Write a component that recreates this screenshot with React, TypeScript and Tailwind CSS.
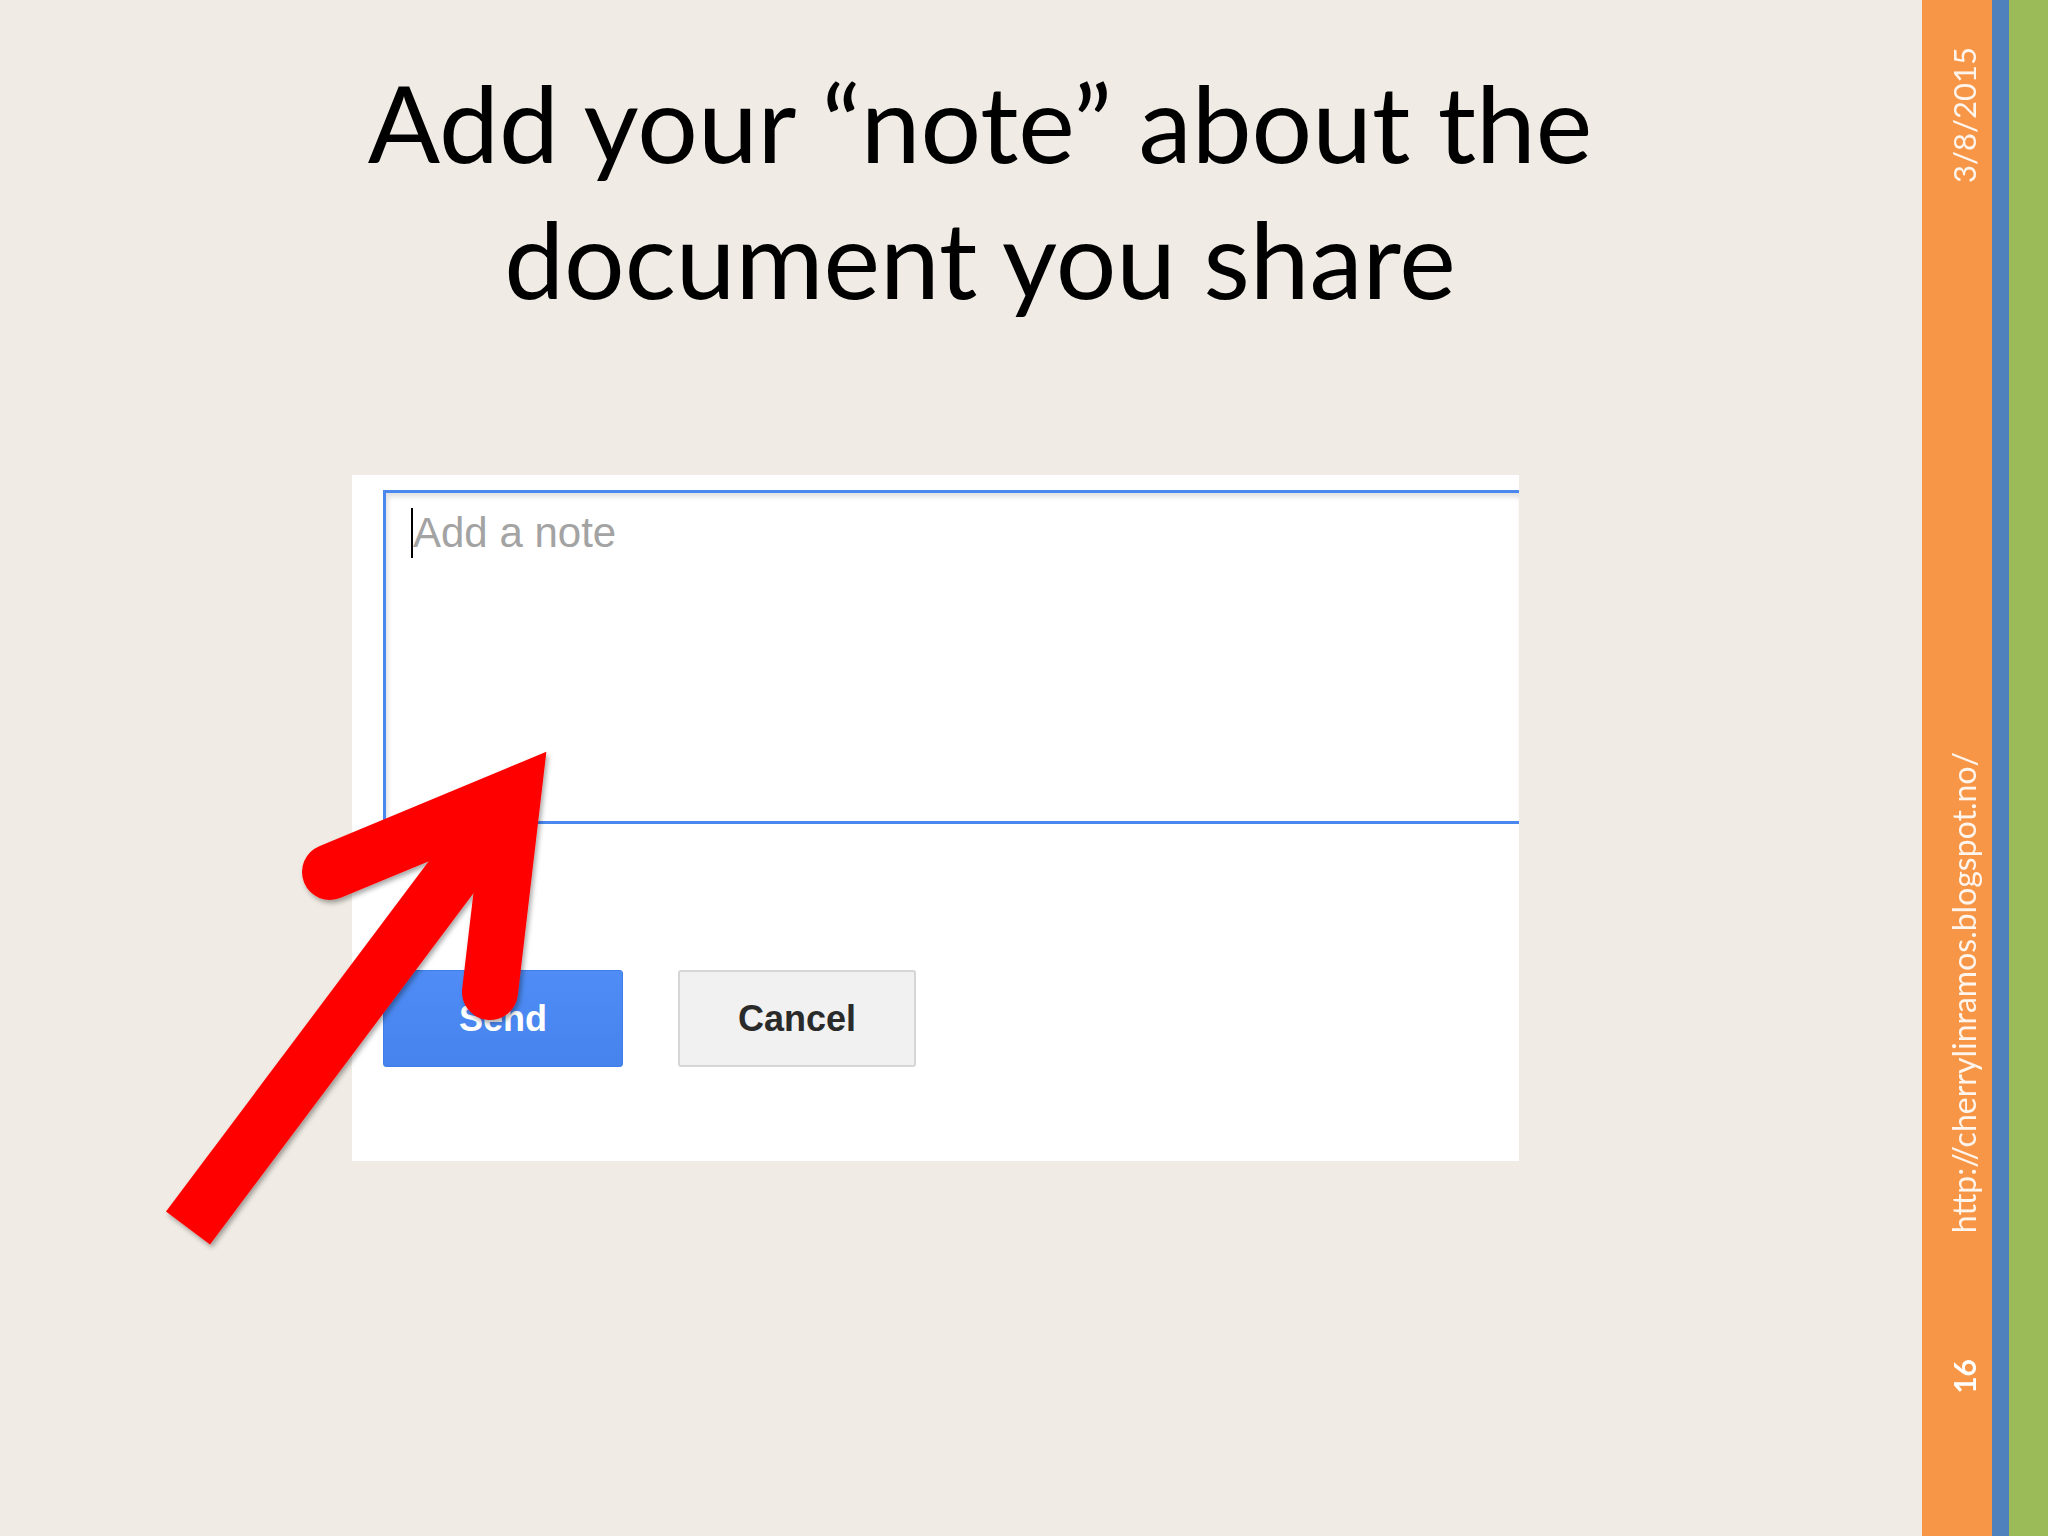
import React from 'react'

const slideFont = { fontFamily: 'Lato, "Open Sans", sans-serif' }
const uiFont = { fontFamily: '"Liberation Sans", Arial, sans-serif' }

function RedArrow() {
  return (
    <svg
      className="pointer-events-none absolute left-0 top-0"
      width={2048}
      height={1536}
      viewBox="0 0 2048 1536"
    >
      <defs>
        <filter id="arrowShadow" x="-20%" y="-20%" width="140%" height="140%">
          <feDropShadow dx="2" dy="3" stdDeviation="2.5" floodColor="#000" floodOpacity="0.35" />
        </filter>
      </defs>
      <g filter="url(#arrowShadow)" fill="none" stroke="#ff0000">
        <line x1={188} y1={1228} x2={482} y2={836} strokeWidth={55} strokeLinecap="butt" />
        <polyline
          points="330,872 513,796 490,992"
          strokeWidth={56}
          strokeLinecap="round"
          strokeLinejoin="miter"
          strokeMiterlimit={6}
        />
      </g>
    </svg>
  )
}

function NotePanel() {
  return (
    <div className="ml-[352px] mt-[149px] h-[686px] w-[1167px] bg-white pt-[15px] pl-[31px]" style={uiFont}>
      <div className="flex h-[334px] items-start border-[3px] border-r-0 border-[#4a87ee] pl-[25px] pt-[15px] shadow-[inset_2px_4px_5px_rgba(0,0,0,0.12)]">
        <span className="h-[50px] w-[2px] bg-black" />
        <span className="mt-[4px] text-[42px] leading-[42px] text-[#a3a3a3]">Add a note</span>
      </div>
      <div className="mt-[146px] flex gap-[55px]">
        <button className="h-[97px] w-[240px] rounded-[3px] border border-[#3d7eea] bg-gradient-to-b from-[#4f8cf5] to-[#4683ec] text-[36px] font-bold text-white">
          Send
        </button>
        <button className="h-[97px] w-[238px] rounded-[3px] border-2 border-[#d6d6d6] bg-[#f1f1f1] text-[36px] font-bold text-[#2a2a2a]">
          Cancel
        </button>
      </div>
    </div>
  )
}

function SideBars() {
  return (
    <div className="flex h-full">
      <div className="flex w-[70px] flex-col items-center bg-[#f79646] pl-[14px] text-white/90" style={slideFont}>
        <div className="h-[50px]" />
        <div className="flex h-[130px] items-center justify-center">
          <span className="rotate-180 text-[31px] leading-none [writing-mode:vertical-rl]">3/8/2015</span>
        </div>
        <div className="h-[568px]" />
        <div className="flex h-[490px] items-center justify-center">
          <span className="rotate-180 whitespace-nowrap text-[32px] leading-none [writing-mode:vertical-rl]">
            http://cherrylinramos.blogspot.no/
          </span>
        </div>
        <div className="h-[120px]" />
        <div className="flex h-[37px] items-center justify-center">
          <span className="rotate-180 text-[30px] font-bold leading-none text-white [writing-mode:vertical-rl]">16</span>
        </div>
      </div>
      <div className="w-[17px] bg-[#4f81bd]" />
      <div className="w-[39px] bg-[#9bbb59]" />
    </div>
  )
}

export default function App() {
  return (
    <div className="relative flex h-[1536px] w-[2048px] overflow-hidden bg-[#f0ebe4]">
      <div className="flex w-[1922px] flex-col">
        <h1
          className="pt-[54px] pl-[38px] text-center text-[107px] font-normal leading-[136px] text-black"
          style={slideFont}
        >
          Add your “note” about the
          <br />
          document you share
        </h1>
        <NotePanel />
      </div>
      <SideBars />
      <RedArrow />
    </div>
  )
}
